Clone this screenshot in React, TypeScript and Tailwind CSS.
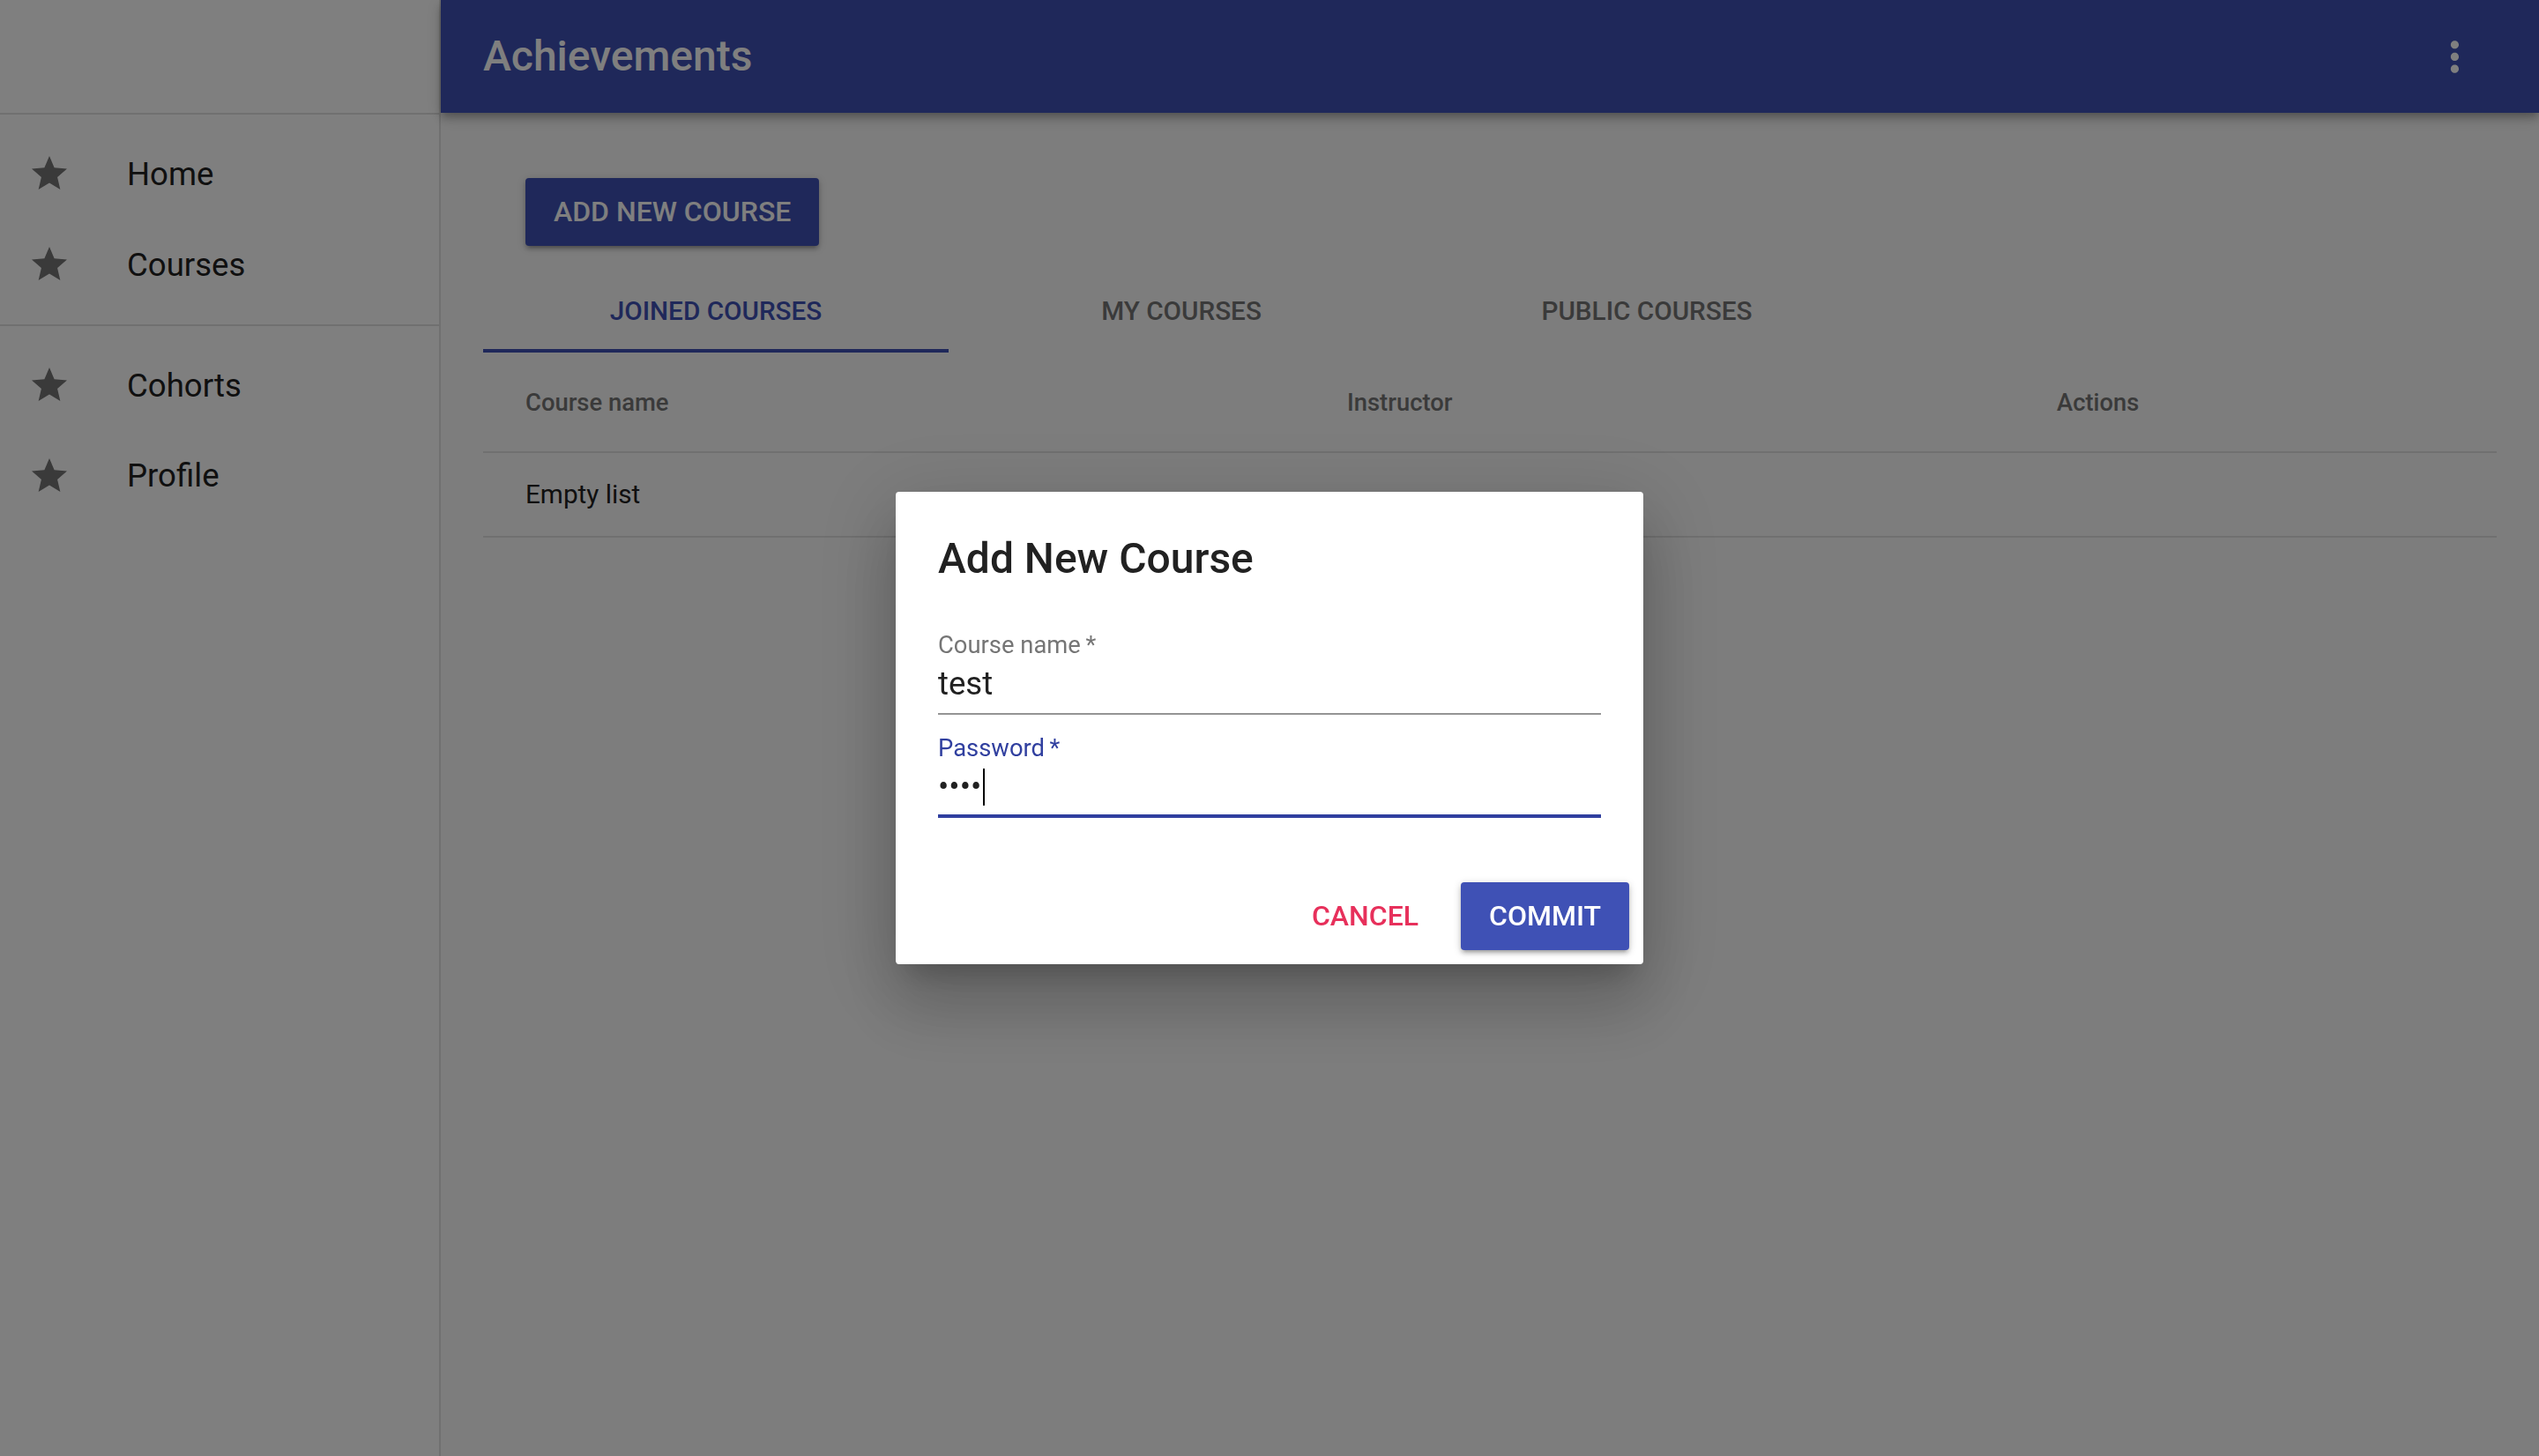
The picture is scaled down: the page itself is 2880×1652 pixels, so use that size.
import React from "react";

const StarIcon = () => (
  <svg viewBox="0 0 24 24" className="w-[48px] h-[48px] fill-[#757575] shrink-0">
    <path d="M12 17.27L18.18 21l-1.64-7.03L22 9.24l-7.19-.61L12 2 9.19 8.63 2 9.24l5.46 4.73L5.82 21z" />
  </svg>
);

const MoreVertIcon = () => (
  <svg viewBox="0 0 24 24" className="w-[54.9px] h-[54.9px] fill-white">
    <path d="M12 8c1.1 0 2-.9 2-2s-.9-2-2-2-2 .9-2 2 .9 2 2 2zm0 2c-1.1 0-2 .9-2 2s.9 2 2 2 2-.9 2-2-.9-2-2-2zm0 6c-1.1 0-2 .9-2 2s.9 2 2 2 2-.9 2-2-.9-2-2-2z" />
  </svg>
);

const NavItem = ({ label }: { label: string }) => (
  <li className="flex items-center h-[102.8px] pl-[32px] pr-[32px]">
    <StarIcon />
    <span className="ml-[64px] pt-[2px] text-[36.6px] leading-none text-[#212121]">{label}</span>
  </li>
);

const tabs = ["Joined courses", "My courses", "Public courses"];

export default function App() {
  return (
    <div className="relative flex h-screen w-full overflow-hidden bg-[#fafafa] font-['Roboto',sans-serif]">
      <aside className="flex h-full w-[500px] shrink-0 flex-col border-r-2 border-[#e0e0e0] bg-white">
        <div className="h-[128px]" />
        <div className="h-[2px] bg-[#e0e0e0]" />
        <ul className="py-[16px]">
          <NavItem label="Home" />
          <NavItem label="Courses" />
        </ul>
        <div className="h-[2px] bg-[#e0e0e0]" />
        <ul className="py-[16px]">
          <NavItem label="Cohorts" />
          <NavItem label="Profile" />
        </ul>
      </aside>

      <div className="flex min-w-0 flex-1 flex-col">
        <header className="relative z-10 flex h-[128px] shrink-0 items-center bg-[#3f51b5] px-[48px] shadow-[0_4px_8px_-2px_rgba(0,0,0,0.2),0_8px_10px_0_rgba(0,0,0,0.14),0_2px_20px_0_rgba(0,0,0,0.12)]">
          <h1 className="flex-1 text-[48px] font-medium leading-none text-white">Achievements</h1>
          <button className="flex h-[96px] w-[96px] items-center justify-center">
            <MoreVertIcon />
          </button>
        </header>

        <main className="px-[48px]">
          <div className="pl-[48px] pt-[74px]">
            <button className="h-[76.8px] min-w-[176px] rounded-[4px] bg-[#3f51b5] px-[32px] text-[32px] font-medium uppercase leading-[44.8px] text-white shadow-[0_2px_10px_0_rgba(0,0,0,0.2),0_4px_4px_0_rgba(0,0,0,0.14),0_6px_2px_-4px_rgba(0,0,0,0.12)]">
              Add new course
            </button>
          </div>

          <div className="mt-[25px] flex h-[96px]">
            {tabs.map((t, i) => (
              <div
                key={t}
                className={
                  i === 0
                    ? "relative flex h-[96px] w-[528px] items-center justify-center pt-[3px] text-[29.7px] font-medium uppercase text-[#3f51b5]"
                    : "relative flex h-[96px] w-[528px] items-center justify-center pt-[3px] text-[29.7px] font-medium uppercase text-[#757575]"
                }
              >
                {t}
                {i === 0 && <div className="absolute bottom-0 left-0 h-[4px] w-full bg-[#3f51b5]" />}
              </div>
            ))}
          </div>

          <div className="grid h-[114px] grid-cols-[932px_805px_1fr] items-center border-b-2 border-[#e0e0e0] pt-[3px] text-[27.4px] font-medium text-[#757575]">
            <div className="pl-[48px]">Course name</div>
            <div className="pl-[48px]">Instructor</div>
            <div className="pl-[48px]">Actions</div>
          </div>
          <div className="flex h-[96px] items-center border-b-2 border-[#e0e0e0] pl-[48px] text-[29.7px] text-[#212121]">
            Empty list
          </div>
        </main>
      </div>

      <div className="fixed inset-0 z-20 bg-black/50" />

      <div className="fixed inset-0 z-30 flex items-center justify-center">
        <div className="w-[848px] rounded-[4px] bg-white shadow-[0_22px_30px_-14px_rgba(0,0,0,0.2),0_48px_76px_6px_rgba(0,0,0,0.14),0_18px_92px_16px_rgba(0,0,0,0.12)]">
          <div className="px-[48px] pb-[38px] pt-[48px]">
            <h2 className="text-[48px] font-medium leading-[56px] text-[#212121]">Add New Course</h2>
          </div>
          <div className="flex flex-col px-[48px] pb-[49px]">
            <div className="relative mb-[8px] mt-[16px] pt-[32px]">
              <label className="absolute left-0 top-[3px] text-[27.4px] leading-none text-[#757575]">
                Course name&thinsp;*
              </label>
              <div className="h-[63.4px] border-b-2 border-[#949494] pb-[14px] pt-[6px] text-[36.6px] leading-[43.4px] text-[#212121]">
                test
              </div>
            </div>
            <div className="relative mb-[8px] mt-[14px] pt-[32px]">
              <label className="absolute left-0 top-[3px] text-[27.4px] leading-none text-[#303f9f]">
                Password&thinsp;*
              </label>
              <div className="flex h-[63.4px] items-center border-b-4 border-[#303f9f] pb-[10px] pt-[6px] text-[36.6px] leading-[43.4px] text-[#212121]">
                <span>••••</span>
                <span className="ml-[2px] h-[42px] w-[2px] bg-black" />
              </div>
            </div>
          </div>
          <div className="mx-[8px] mb-[16px] mt-[16px] flex items-center justify-end">
            <button className="mx-[8px] h-[76.8px] min-w-[176px] rounded-[4px] px-[32px] text-[32px] font-medium uppercase leading-[44.8px] text-[#e7305b]">
              Cancel
            </button>
            <button className="mx-[8px] h-[76.8px] min-w-[176px] rounded-[4px] bg-[#3f51b5] px-[32px] text-[32px] font-medium uppercase leading-[44.8px] text-white shadow-[0_2px_10px_0_rgba(0,0,0,0.2),0_4px_4px_0_rgba(0,0,0,0.14),0_6px_2px_-4px_rgba(0,0,0,0.12)]">
              Commit
            </button>
          </div>
        </div>
      </div>
    </div>
  );
}
